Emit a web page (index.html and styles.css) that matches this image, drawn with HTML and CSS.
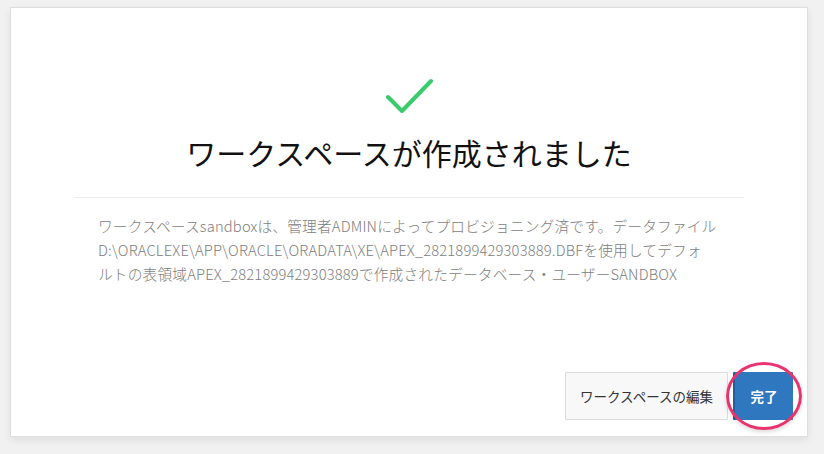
FILE: index.html
```html
<!DOCTYPE html>
<html lang="ja">
<head>
<meta charset="utf-8">
<title>ワークスペースが作成されました</title>
<link rel="stylesheet" href="styles.css">
</head>
<body>
<div class="card">
  <div class="icon">
    <svg width="48" height="36" viewBox="0 0 48 36">
      <polyline points="3,19 17,33 46,3" fill="none" stroke="#38cc6c" stroke-width="4" stroke-linecap="round" stroke-linejoin="round"/>
    </svg>
  </div>
  <h1 class="title">ワークスペースが作成されました</h1>
  <hr class="divider">
  <p class="message">ワークスペースsandboxは、管理者ADMINによってプロビジョニング済です。データファイル<br>D:\ORACLEXE\APP\ORACLE\ORADATA\XE\APEX_2821899429303889.DBFを使用してデフォ<br>ルトの表領域APEX_2821899429303889で作成されたデータベース・ユーザーSANDBOX</p>
  <div class="footer">
    <button class="btn btn-edit">ワークスペースの編集</button>
    <div class="done-wrap">
      <button class="btn btn-done">完了</button>
      <span class="highlight"></span>
    </div>
  </div>
</div>
</body>
</html>
```
FILE: styles.css
```css
html, body {
  margin: 0;
  padding: 0;
}
body {
  background: #f1f1f1;
  font-family: "Noto Sans CJK JP", "Noto Sans", sans-serif;
  width: 824px;
  height: 454px;
  overflow: hidden;
}
.card {
  box-sizing: border-box;
  margin: 7px 0 0 10px;
  width: 798px;
  height: 430px;
  background: #fff;
  border: 1px solid #dedede;
  box-shadow: 0 3px 8px rgba(0,0,0,0.08);
  display: flex;
  flex-direction: column;
}
.icon {
  display: flex;
  justify-content: center;
  margin-top: 70px;
}
.icon svg {
  display: block;
}
.title {
  margin: 18px 0 0 0;
  text-align: center;
  font-size: 30px;
  font-weight: 400;
  line-height: 40px;
  color: #111;
}
.divider {
  margin: 25px 63px 0 63px;
  border: 0;
  border-top: 1px solid #ececec;
  height: 0;
}
.message {
  margin: 16px 0 0 0;
  padding: 0 60px 0 87px;
  font-size: 14.7px;
  font-weight: 300;
  letter-spacing: 0.18px;
  line-height: 24px;
  color: #7d7d7d;
  white-space: nowrap;
}
.footer {
  margin-top: auto;
  display: flex;
  justify-content: flex-end;
  align-items: stretch;
  gap: 5px;
  padding: 0 14px 16px 0;
}
.btn {
  font-family: "Noto Sans CJK JP", "Noto Sans", sans-serif;
  font-size: 13.5px;
  height: 48px;
  box-sizing: border-box;
  cursor: pointer;
}
.btn-edit {
  background: #f8f8f8;
  border: 1px solid #dcdcdc;
  color: #333;
  padding: 0 14px;
  font-weight: 400;
  border-radius: 1px;
}
.done-wrap {
  position: relative;
  display: flex;
}
.btn-done {
  background: #2f77bf;
  border: 0;
  border-left: 2px solid #245e94;
  color: #fff;
  width: 60px;
  font-weight: 700;
  padding: 0;
  border-radius: 1px;
}
.highlight {
  position: absolute;
  left: -7px;
  top: -10px;
  width: 70px;
  height: 62px;
  border: 3px solid #e9336f;
  border-radius: 50%;
  box-shadow: 0 2px 4px rgba(0,0,0,0.15);
  pointer-events: none;
}
```
